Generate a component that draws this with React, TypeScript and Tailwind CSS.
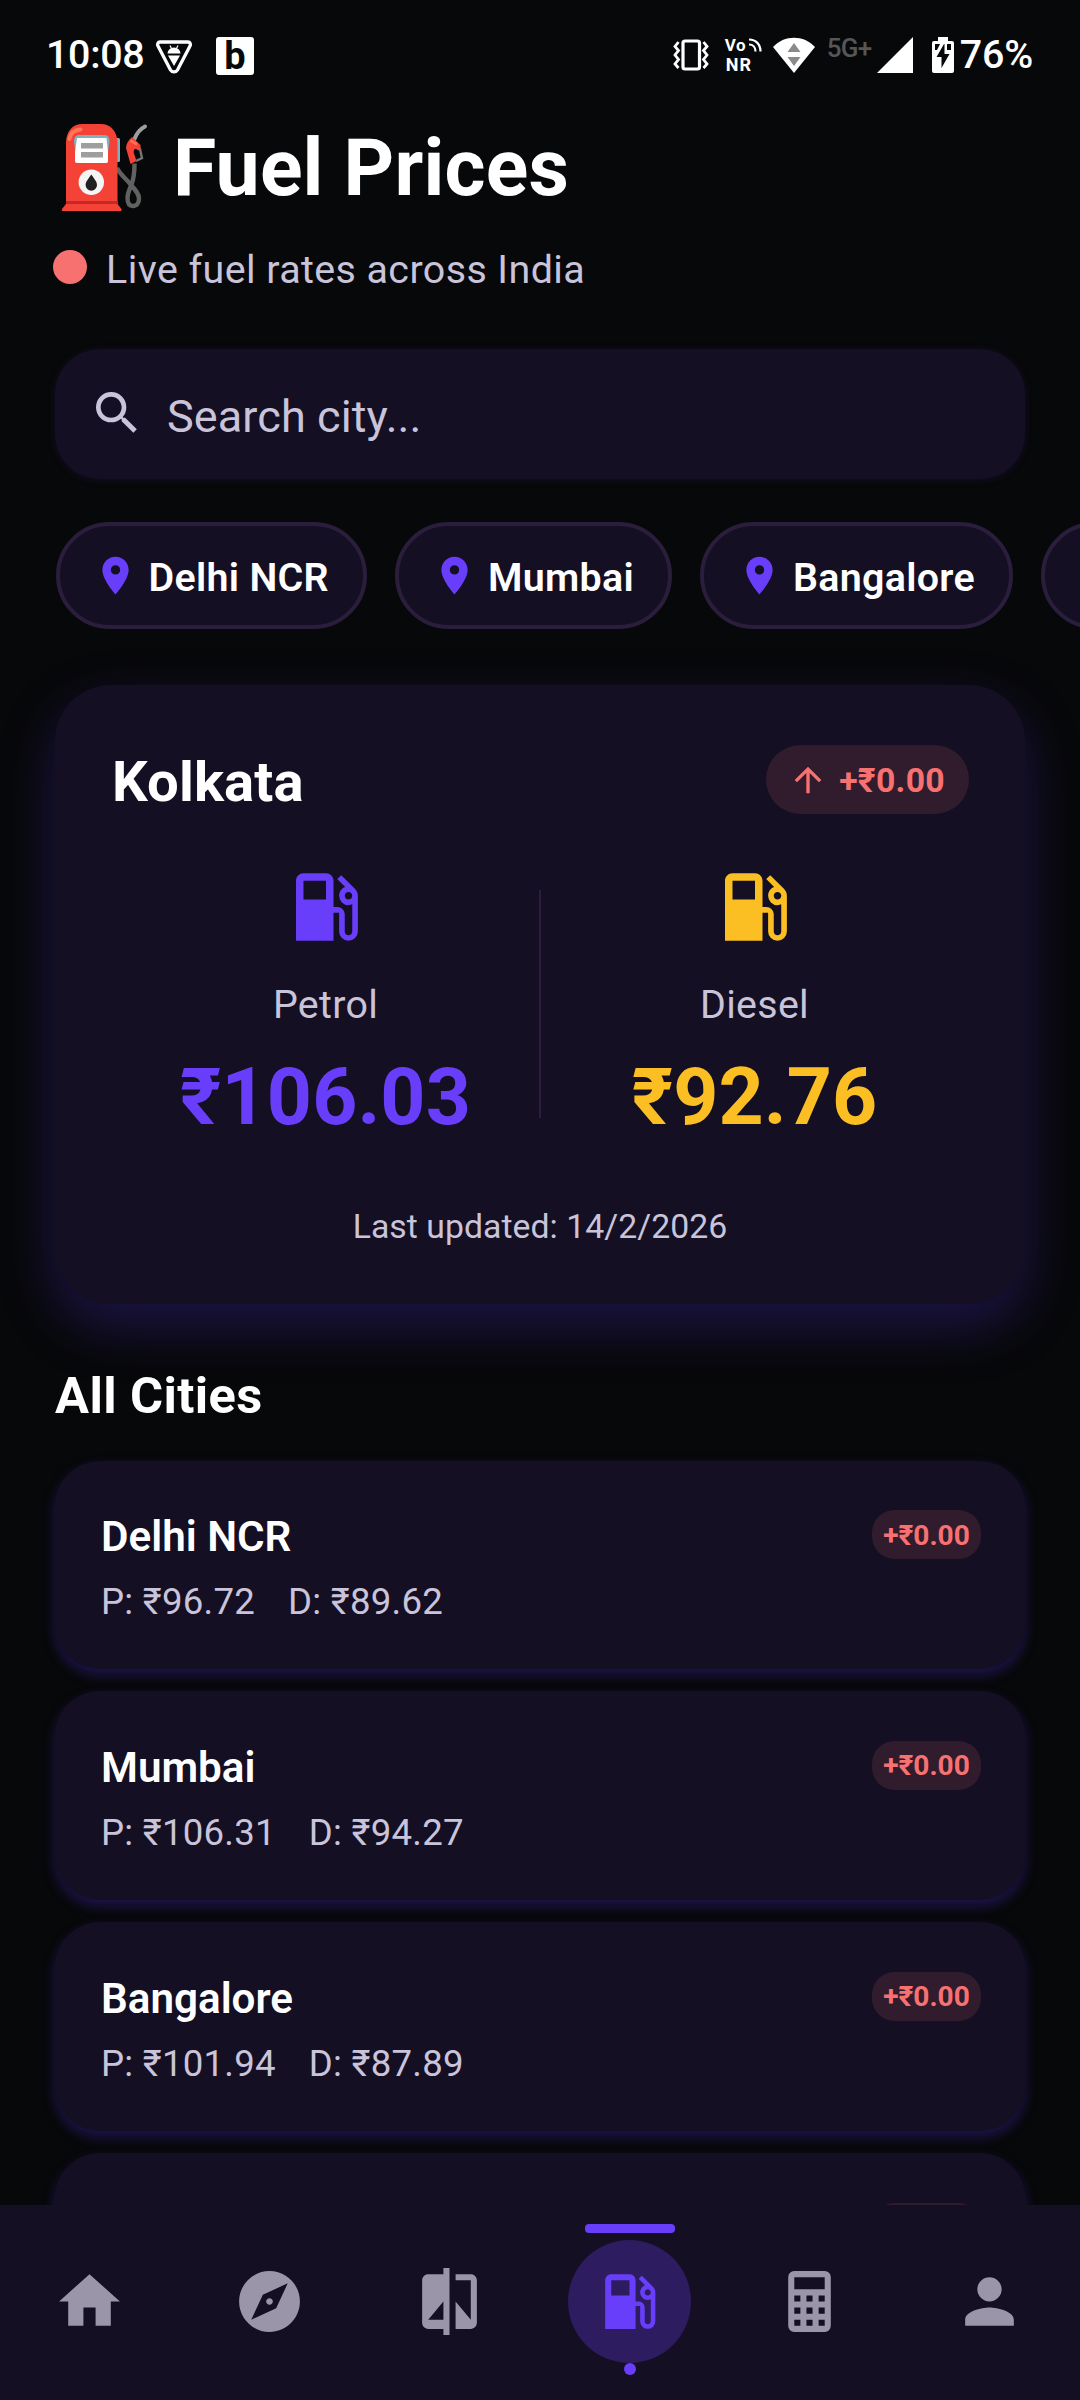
import {
  MdArrowUpward,
  MdCompare,
  MdExplore,
  MdHome,
  MdLocalGasStation,
  MdLocationOn,
  MdPerson,
  MdSearch,
} from 'react-icons/md';
import type { IconType } from 'react-icons';

interface City {
  name: string;
  petrol: string;
  diesel: string;
  change: string;
}

type NavItem = {
  id: string;
  label: string;
  icon: IconType;
};

const quickCities = ['Delhi NCR', 'Mumbai', 'Bangalore', 'Chennai'];

const cities: City[] = [
  { name: 'Delhi NCR', petrol: '96.72', diesel: '89.62', change: '+₹0.00' },
  { name: 'Mumbai', petrol: '106.31', diesel: '94.27', change: '+₹0.00' },
  { name: 'Bangalore', petrol: '101.94', diesel: '87.89', change: '+₹0.00' },
  { name: 'Chennai', petrol: '100.75', diesel: '92.34', change: '+₹0.00' },
];

// Portrait keypad calculator, MdCalculate is the square one
const CalculatorIcon: IconType = ({ size = 24, className }) => (
  <svg viewBox="0 0 24 24" width={size} height={size} fill="currentColor" className={className}>
    <path
      fillRule="evenodd"
      d="M7 2h10a2 2 0 0 1 2 2v16a2 2 0 0 1-2 2H7a2 2 0 0 1-2-2V4a2 2 0 0 1 2-2zM7 4v4h10V4H7zm0 6v2h2v-2H7zm4 0v2h2v-2h-2zm4 0v2h2v-2h-2zm-8 4v2h2v-2H7zm4 0v2h2v-2h-2zm4 0v2h2v-2h-2zm-8 4v2h2v-2H7zm4 0v2h2v-2h-2zm4 0v2h2v-2h-2z"
    />
  </svg>
);

const navItems: NavItem[] = [
  { id: 'home', label: 'Home', icon: MdHome },
  { id: 'explore', label: 'Explore', icon: MdExplore },
  { id: 'compare', label: 'Compare', icon: MdCompare },
  { id: 'fuel', label: 'Fuel', icon: MdLocalGasStation },
  { id: 'calculator', label: 'Calculator', icon: CalculatorIcon },
  { id: 'profile', label: 'Profile', icon: MdPerson },
];

function StatusBar() {
  return (
    <div className="flex h-[110px] shrink-0 items-center pl-[46px] pr-[47px] text-white">
      <span className="w-[98px] whitespace-nowrap text-[39.4px] font-medium leading-[46px] tracking-[-0.3px]">10:08</span>
      <svg viewBox="0 0 38 36" className="ml-[11px] mt-1 h-[36px] w-[38px] shrink-0" fill="none">
        <path d="M5 3h28c2 0 3 2 2 4L22.500 31c-1.500 2.500-5.500 2.500-7 0L3 7c-1-2 0-4 2-4z" stroke="#fff" strokeWidth="3.300" />
        <path d="M12.500 14.500a6.500 6 0 0 1 13 0zM13 16.500h12L19 27z" fill="#fff" />
        <path d="M15 6.500l1.500 3M23 6.500l-1.500 3" stroke="#fff" strokeWidth="1.200" />
      </svg>
      <span className="ml-[23px] mt-[2px] flex h-[38px] w-[38px] shrink-0 items-center justify-center rounded-[3px] bg-white text-[38px] font-bold leading-[38px] text-[#070809]">
        b
      </span>

      <div className="ml-auto flex items-center">
        <svg viewBox="0 0 36 32" className="h-[32px] w-[36px]" fill="none" stroke="#fff">
          <rect x="10" y="2" width="16.500" height="28" rx="2" strokeWidth="3.200" />
          <path d="M5.500 3L2 7.500l3.500 4L2 16l3.500 4.500L2 25l3.500 4M30.500 3L34 7.500l-3.500 4L34 16l-3.500 4.500L34 25l-3.500 4" strokeWidth="2.800" />
        </svg>
        <div className="ml-[16px] flex w-[38px] flex-col font-bold">
          <div className="flex h-[19px] items-center">
            <span className="text-[17px] leading-[19px] tracking-[0.5px]">Vo</span>
            <svg viewBox="0 0 14 14" className="ml-[2px] h-[14px] w-[14px]" fill="none" stroke="#fff" strokeWidth="2.200">
              <path d="M1 1.500c7 0 11.500 5 11.500 12M1 6.500c4 0 6.500 3 6.500 7" />
            </svg>
          </div>
          <span className="pl-[1px] text-[18px] leading-[20px] tracking-[1px]">NR</span>
        </div>
        <svg viewBox="0 0 42 36" className="ml-[10px] h-[36px] w-[42px]">
          <path d="M0 10C11-2.500 31-2.500 42 10L21 36z" fill="#fff" />
          <path d="M21 6l6.500 9h-13zM14.500 20h13L21 29z" fill="#8a8a8a" />
        </svg>
        <span className="-mt-[15px] ml-[12px] w-[50px] text-[26px] font-medium leading-[26px] tracking-[-0.8px] text-[#555657]">5G+</span>
        <svg viewBox="0 0 36 36" className="h-[36px] w-[36px]">
          <path d="M36 0v36H0z" fill="#fff" />
        </svg>
        <svg viewBox="0 0 22 36" className="ml-[19px] h-[36px] w-[22px]">
          <path d="M6 0h10v4h4a2 2 0 0 1 2 2v28a2 2 0 0 1-2 2H2a2 2 0 0 1-2-2V6a2 2 0 0 1 2-2h4z" fill="#fff" />
          <path d="M12 7L4.500 20H9.500V31L17.500 17H12.500V7z" fill="#070809" />
          <path d="M3 7h5l-3 6H3zM15 7h4v6h-4z" fill="#070809" />
        </svg>
        <span className="ml-[6px] text-[39.4px] font-medium leading-[46px] tracking-[-0.2px]">76%</span>
      </div>
    </div>
  );
}

function FuelPumpEmoji() {
  return (
    <svg viewBox="60 122 90 92" className="h-[92px] w-[90px] shrink-0" fill="none">
      <path d="M117 168c3 6 7 9 12 14.500 6 7 10 11 10 16 0 4-2 7.500-6 7.500s-5.500-3.500-5.500-8c0-4 2-9 4-13.500 2-5 3-9 3-21" stroke="#616161" strokeWidth="4.400" />
      <path d="M145 126.500c-4 2-8 6-10.500 12.500" stroke="#9e9e9e" strokeWidth="4" strokeLinecap="round" />
      <path d="M137 149h3l2 9-6 3" stroke="#757575" strokeWidth="2.400" />
      <path d="M132 137l8.500 8v4.500l-6-.5-1 3 3 9-6 3-4.500-16c0-4 2-7 6-11z" fill="#f44336" />
      <path d="M130.500 140.500l6.500 4" stroke="#ff7555" strokeWidth="2.600" />
      <rect x="115" y="138" width="5" height="24" rx="1.500" fill="#82aec0" />
      <path d="M66 204v-61c0-12 7-19 16-19h19c9 0 16.500 7 16.500 19v61z" fill="#f44336" />
      <path d="M66 201h51.500v3l4 5v2H62v-2l4-5z" fill="#f44336" />
      <path d="M66 201h51.500v3H66z" fill="#c62828" />
      <path d="M69.500 139c1-6 5-9 11-9.500" stroke="#ff7555" strokeWidth="4" strokeLinecap="round" />
      <path d="M76 155l-2-13c0-5 2-7 5-7h25c4 0 5.500 2 5.500 7l-2 13z" fill="#82aec0" />
      <path d="M77 138h29.500l1.500 14v9c0 1-.5 2-2 2H77c-1.500 0-2-1-2-2v-9z" fill="#fff" />
      <path d="M81 143h22v5.500H81zM81 152h22v5.500H81z" fill="#9e9e9e" />
      <circle cx="91.300" cy="182.300" r="12.700" fill="#f5f5f5" />
      <path d="M91.300 174.500c3 4.500 5.700 7 5.700 10.500a5.700 5.700 0 0 1-11.400 0c0-3.500 2.700-6 5.700-10.500z" fill="#212121" />
    </svg>
  );
}

function CityChip({ name }: { name: string }) {
  return (
    <button
      type="button"
      className="flex h-[107px] shrink-0 items-center rounded-full border-4 border-[#2a1e3c] bg-[#140f23] pl-[33px] pr-[34.500px]"
    >
      <MdLocationOn size={45} className="shrink-0 text-[#693efa]" />
      <span className="ml-[10.500px] mt-[4px] text-[39.4px] font-semibold leading-[46px] tracking-[0.3px] text-white">{name}</span>
    </button>
  );
}

function FuelColumn({ label, price, color }: { label: string; price: string; color: string }) {
  return (
    <div className={`flex flex-1 flex-col items-center ${color}`}>
      <MdLocalGasStation size={90} />
      <span className="mt-[30px] text-[39.4px] leading-[46px] tracking-[0.3px] text-[#c9c4da]">{label}</span>
      <span className="mt-[23px] text-[78.75px] font-bold leading-[92px] tracking-[0.1px]">₹{price}</span>
    </div>
  );
}

function FeaturedCard() {
  return (
    <section className="mx-[55px] mt-[56px] flex h-[619px] shrink-0 flex-col rounded-[56px] bg-[#140f23] px-[57px] shadow-[0_22px_56px_rgba(95,60,255,0.25)]">
      <div className="mt-[60px] flex h-[69px] items-center justify-between">
        <h2 className="mt-[5px] text-[56.25px] font-bold leading-[66px] tracking-[0.1px] text-white">Kolkata</h2>
        <div className="-mr-px flex h-[69px] items-center rounded-full bg-[#311c2e] pl-[22px] pr-[24px] text-[#f87171]">
          <MdArrowUpward size={40} />
          <span className="ml-[11px] mt-[2px] text-[33.75px] font-bold leading-[40px] tracking-[0.3px]">+₹0.00</span>
        </div>
      </div>
      <div className="mt-[48px] flex h-[284px]">
        <FuelColumn label="Petrol" price="106.03" color="text-[#693efa]" />
        <div className="mt-[28px] h-[228px] w-[2px] bg-[#2a1e3c]" />
        <FuelColumn label="Diesel" price="92.76" color="text-[#fbbf24]" />
      </div>
      <p className="mt-[61px] text-center text-[33.75px] leading-[40px] tracking-[0.05px] text-[#c9c4da]">Last updated: 14/2/2026</p>
    </section>
  );
}

function CityCard({ city }: { city: City }) {
  return (
    <article className="flex h-[208.6px] shrink-0 items-start justify-between rounded-[45px] bg-[#140f23] pl-[46px] pr-[44px] shadow-[0_6px_13px_rgba(90,55,255,0.28)]">
      <div>
        <h3 className="mt-[51.5px] text-[42.2px] font-semibold leading-[50px] text-white">{city.name}</h3>
        <div className="mt-[18px] flex gap-[33px] text-[36.6px] leading-[44px] tracking-[0.25px] text-[#c9c4da]">
          <span>P: ₹{city.petrol}</span>
          <span>D: ₹{city.diesel}</span>
        </div>
      </div>
      <span className="mt-[49.5px] flex h-[49px] w-[109px] items-center justify-center rounded-[22.5px] bg-[#311c2e] pt-[2px] text-[28.1px] font-bold leading-[34px] text-[#f87171]">
        {city.change}
      </span>
    </article>
  );
}

function BottomNav({ active }: { active: string }) {
  return (
    <nav className="z-10 grid h-[195px] shrink-0 grid-cols-6 bg-[#140f23]">
      {navItems.map((item) => {
        const isActive = item.id === active;
        const Icon = item.icon;
        return (
          <button key={item.id} type="button" aria-label={item.label} className="flex flex-col items-center pt-[19px]">
            <span className={`h-[9px] w-[90px] rounded-[4px] ${isActive ? 'bg-[#693efa]' : ''}`} />
            <span
              className={`mr-[2px] mt-[7px] flex h-[123px] w-[123px] items-center justify-center rounded-full ${
                isActive ? 'bg-[#2d1c60] text-[#693efa]' : 'text-[#9a95a8]'
              }`}
            >
              <Icon size={73} />
            </span>
            <span className={`h-[12px] w-[12px] rounded-full ${isActive ? 'bg-[#693efa]' : ''}`} />
          </button>
        );
      })}
    </nav>
  );
}

export default function App() {
  return (
    <div className="flex h-[2400px] w-[1080px] flex-col overflow-hidden bg-[#070809] font-['Roboto',sans-serif]">
      <StatusBar />
      <main className="flex min-h-0 flex-1 flex-col overflow-hidden">
        <header className="shrink-0">
          <div className="flex h-[116px] items-center pl-[60px]">
            <FuelPumpEmoji />
            <h1 className="ml-[23px] text-[78.75px] font-bold leading-[92px] tracking-[0.2px] text-white">Fuel Prices</h1>
          </div>
          <div className="mt-[20px] flex h-[46px] items-center pl-[53px]">
            <span className="-mt-1 h-[34px] w-[34px] rounded-full bg-[#f87171]" />
            <span className="ml-[19px] mt-px text-[39.4px] leading-[46px] tracking-[0.42px] text-[#c9c4da]">
              Live fuel rates across India
            </span>
          </div>
        </header>

        <div className="mx-[55px] mt-[57px] flex h-[130px] shrink-0 items-center rounded-[45px] bg-[#140f23] pl-[34px] shadow-[0_1px_8px_rgba(105,62,250,0.12)]">
          <MdSearch size={56} className="-mt-[2px] text-[#c9c4da]" />
          <span className="ml-[22px] mt-[6px] text-[45px] leading-[54px] tracking-[0.1px] text-[#c9c4da]">Search city...</span>
        </div>

        <div className="mt-[43px] flex shrink-0 gap-[28px] overflow-hidden pl-[56px]">
          {quickCities.map((name) => (
            <CityChip key={name} name={name} />
          ))}
        </div>

        <FeaturedCard />

        <h2 className="mt-[62px] shrink-0 pl-[55px] text-[50.6px] font-bold leading-[60px] tracking-[0.4px] text-white">
          All Cities
        </h2>
        <div className="mx-[55px] mt-[34.7px] flex shrink-0 flex-col gap-[22.2px]">
          {cities.map((city) => (
            <CityCard key={city.name} city={city} />
          ))}
        </div>
      </main>
      <BottomNav active="fuel" />
    </div>
  );
}
